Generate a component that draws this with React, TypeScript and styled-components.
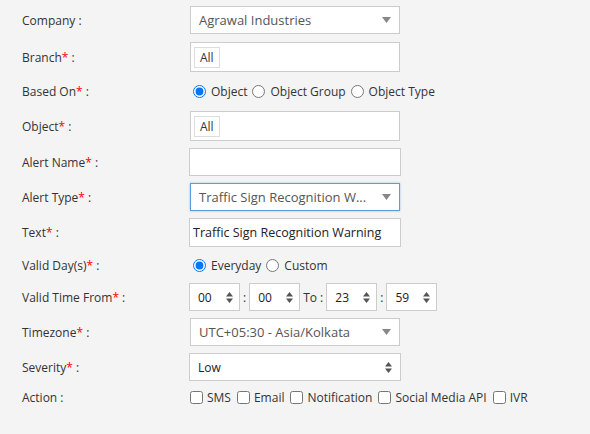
import styled, { createGlobalStyle } from "styled-components";

const GlobalStyle = createGlobalStyle`
  html, body {
    margin: 0;
    padding: 0;
    background: #f4f4f4;
  }
  body {
    font-family: "Open Sans", "Noto Sans", sans-serif;
    color: #333;
  }
`;

function Label({ text, required }: { text: string; required?: boolean }) {
  return (
    <LabelText>
      {text}
      {required && <Star>*</Star>} :
    </LabelText>
  );
}

function Caret() {
  return (
    <svg width="9" height="6" viewBox="0 0 9 6">
      <path d="M0 0h9L4.5 6z" fill="#888" />
    </svg>
  );
}

function Spinner() {
  return (
    <svg width="7" height="11" viewBox="0 0 7 11">
      <path d="M0 4.5h7L3.5 0z M0 6.5h7L3.5 11z" fill="#555" />
    </svg>
  );
}

function TimeBox({ value }: { value: string }) {
  return (
    <TimeField>
      <span>{value}</span>
      <Spinner />
    </TimeField>
  );
}

export default function App() {
  return (
    <>
      <GlobalStyle />
      <Form>
        <Row>
          <Label text="Company" />
          <SelectBox>
            <SelectValue>Agrawal Industries</SelectValue>
            <Caret />
          </SelectBox>
        </Row>
        <Row $top={1}>
          <Label text="Branch" required />
          <ChipBox>
            <Chip>All</Chip>
          </ChipBox>
        </Row>
        <Row $h={25}>
          <Label text="Based On" required />
          <Options>
            <Option>
              <Radio type="radio" name="based" defaultChecked />
              Object
            </Option>
            <Option>
              <Radio type="radio" name="based" />
              Object Group
            </Option>
            <Option>
              <Radio type="radio" name="based" />
              Object Type
            </Option>
          </Options>
        </Row>
        <Row>
          <Label text="Object" required />
          <ChipBox>
            <Chip>All</Chip>
          </ChipBox>
        </Row>
        <Row>
          <Label text="Alert Name" required />
          <TextInput defaultValue="" />
        </Row>
        <Row>
          <Label text="Alert Type" required />
          <SelectBox $focus>
            <SelectValue>Traffic Sign Recognition W...</SelectValue>
            <Caret />
          </SelectBox>
        </Row>
        <Row>
          <Label text="Text" required />
          <TextInput $h={29} defaultValue="Traffic Sign Recognition Warning" />
        </Row>
        <Row $h={22}>
          <Label text="Valid Day(s)" required />
          <Options>
            <Option>
              <Radio type="radio" name="day" defaultChecked />
              Everyday
            </Option>
            <Option>
              <Radio type="radio" name="day" />
              Custom
            </Option>
          </Options>
        </Row>
        <Row>
          <Label text="Valid Time From" required />
          <TimeRow>
            <TimeBox value="00" />
            <Sep>:</Sep>
            <TimeBox value="00" />
            <Sep>To :</Sep>
            <TimeBox value="23" />
            <Sep>:</Sep>
            <TimeBox value="59" />
          </TimeRow>
        </Row>
        <Row>
          <Label text="Timezone" required />
          <SelectBox>
            <SelectValue>UTC+05:30 - Asia/Kolkata</SelectValue>
            <Caret />
          </SelectBox>
        </Row>
        <Row>
          <Label text="Severity" required />
          <NativeSelect>
            <span>Low</span>
            <Spinner />
          </NativeSelect>
        </Row>
        <Row $h={19}>
          <LabelText>Action :</LabelText>
          <Options $gap={4}>
            {["SMS", "Email", "Notification", "Social Media API", "IVR"].map(
              (a) => (
                <Option key={a}>
                  <Check type="checkbox" />
                  {a}
                </Option>
              )
            )}
          </Options>
        </Row>
      </Form>
    </>
  );
}

const Form = styled.div`
  display: flex;
  flex-direction: column;
  gap: 7px;
  padding: 6px 0 0 22px;
`;

const Row = styled.div<{ $h?: number; $top?: number }>`
  display: grid;
  grid-template-columns: 167px 1fr;
  align-items: center;
  ${(p) => (p.$h ? `height: ${p.$h}px;` : "")}
  ${(p) => (p.$top ? `margin-top: ${p.$top}px;` : "")}
`;

const LabelText = styled.div`
  font-size: 12px;
  color: #333;
  white-space: nowrap;
`;

const Star = styled.span`
  color: #f00;
`;

const SelectBox = styled.div<{ $focus?: boolean }>`
  box-sizing: border-box;
  width: 210px;
  height: 28px;
  margin-left: 1px;
  display: flex;
  align-items: center;
  justify-content: space-between;
  padding: 0 8px;
  background: #fff;
  border: 1px solid ${(p) => (p.$focus ? "#5b9dd9" : "#ccc")};
  box-shadow: ${(p) => (p.$focus ? "0 0 2px rgba(91,157,217,0.6)" : "none")};
`;

const SelectValue = styled.span`
  font-size: 13px;
  color: #555;
  white-space: nowrap;
`;

const ChipBox = styled.div`
  box-sizing: border-box;
  width: 210px;
  height: 30px;
  margin-left: 1px;
  display: flex;
  align-items: center;
  padding: 0 3px;
  background: #fff;
  border: 1px solid #ccc;
`;

const Chip = styled.span`
  box-sizing: border-box;
  height: 21px;
  padding: 0 5px;
  display: flex;
  align-items: center;
  font-size: 12px;
  color: #333;
  border: 1px solid #ddd;
`;

const TextInput = styled.input<{ $h?: number }>`
  box-sizing: border-box;
  width: 212px;
  height: ${(p) => p.$h ?? 28}px;
  padding: 0 3px;
  border: 1px solid #ccc;
  background: #fff;
  font-family: "Open Sans", sans-serif;
  font-size: 12.5px;
  color: #222;
  outline: none;
`;

const Options = styled.div<{ $gap?: number }>`
  display: flex;
  align-items: center;
  gap: ${(p) => p.$gap ?? 0}px;
  font-size: 12px;
  color: #333;
`;

const Option = styled.label`
  display: flex;
  align-items: center;
  margin-right: 1px;
  white-space: nowrap;
`;

const Radio = styled.input`
  width: 13px;
  height: 13px;
  margin: 0 5px 0 4px;
  accent-color: #0075ff;
`;

const Check = styled.input`
  width: 13px;
  height: 13px;
  margin: 0 4px 0 1px;
`;

const TimeRow = styled.div`
  display: flex;
  align-items: center;
`;

const TimeField = styled.div`
  box-sizing: border-box;
  width: 51px;
  height: 28px;
  display: flex;
  align-items: center;
  justify-content: space-between;
  padding: 0 6px 0 8px;
  background: #fff;
  border: 1px solid #ccc;
  font-size: 12px;
  color: #222;
`;

const Sep = styled.span`
  font-size: 12px;
  color: #333;
  padding: 0 3px;
  white-space: nowrap;
`;

const NativeSelect = styled.div`
  box-sizing: border-box;
  width: 212px;
  height: 28px;
  display: flex;
  align-items: center;
  justify-content: space-between;
  padding: 0 8px;
  background: #fff;
  border: 1px solid #ccc;
  font-size: 12px;
  color: #222;
`;
